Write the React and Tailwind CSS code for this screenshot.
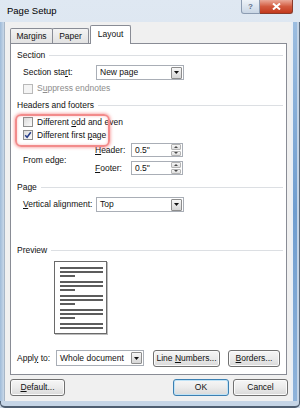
import React from "react";

function U({ children }) {
  return <span className="underline underline-offset-[1px] decoration-[0.5px]">{children}</span>;
}

function Check({ checked, disabled }) {
  return (
    <span
      className={`w-[10px] h-[10px] border flex items-center justify-center shrink-0 ${
        disabled
          ? "border-[#b9b9b9] bg-[#f4f4f4]"
          : "border-[#8e8f8f] bg-linear-to-br from-[#dadada] to-[#fcfcfc]"
      }`}
    >
      {checked && (
        <svg width="8" height="8" viewBox="0 0 8 8">
          <path d="M1.2 4.2 L3.1 6.3 L6.8 1.2" stroke="#263d8a" strokeWidth="1.5" fill="none" />
        </svg>
      )}
    </span>
  );
}

function Arrow() {
  return (
    <span className="w-[11px] h-[12px] border border-[#8d8d8d] rounded-[1px] bg-linear-to-b from-[#f7f7f7] to-[#d6d6d6] flex items-center justify-center shrink-0">
      <svg width="5" height="3" viewBox="0 0 5 3">
        <path d="M0 0H5L2.5 3Z" fill="#111" />
      </svg>
    </span>
  );
}

function Select({ w, h, value }) {
  return (
    <div className={`${w} ${h} border border-[#a9aeb6] bg-white flex items-center justify-between pl-[3px] pr-[1px]`}>
      <span>{value}</span>
      <Arrow />
    </div>
  );
}

function Spin({ value }) {
  return (
    <div className="w-[52px] h-[14px] border border-[#a9aeb6] bg-white flex items-center justify-between pl-[3px] pr-[1px]">
      <span>{value}</span>
      <span className="w-[10px] h-[12px] flex flex-col gap-[1px]">
        <span className="flex-1 border border-[#b4b4b4] rounded-[1px] bg-linear-to-b from-[#f5f5f5] to-[#dedede] flex items-center justify-center">
          <svg width="4" height="2" viewBox="0 0 4 2"><path d="M0 2H4L2 0Z" fill="#4a4a4a" /></svg>
        </span>
        <span className="flex-1 border border-[#b4b4b4] rounded-[1px] bg-linear-to-b from-[#f5f5f5] to-[#dedede] flex items-center justify-center">
          <svg width="4" height="2" viewBox="0 0 4 2"><path d="M0 0H4L2 2Z" fill="#4a4a4a" /></svg>
        </span>
      </span>
    </div>
  );
}

function Btn({ w, children, def }) {
  return (
    <div
      className={`${w} h-full rounded-[3px] border flex items-center justify-center bg-linear-to-b from-[#f6f6f6] via-[#ebebeb] to-[#d9d9d9] ${
        def ? "border-[#3c7fb1] shadow-[inset_0_0_0_1px_#bfe3f7]" : "border-[#707070] shadow-[inset_0_0_0_1px_#fbfbfb]"
      }`}
    >
      <span>{children}</span>
    </div>
  );
}

function Group({ label, mt }) {
  return (
    <div className={`${mt} h-[10px] flex items-center gap-[4px] pr-[3px]`}>
      <span>{label}</span>
      <span className="flex-1 h-px bg-[#dcdfe3]" />
    </div>
  );
}

function PreviewGroup({ last }) {
  return (
    <div className="flex flex-col gap-[2px] mb-[4px]">
      <span className="w-[43px] h-[2px] bg-[#5c5c5c]" />
      <span className="w-[43px] h-[2px] bg-[#5c5c5c]" />
      {!last && <span className="w-[15px] h-[2px] bg-[#5c5c5c]" />}
    </div>
  );
}

export default function App() {
  return (
    <div className="w-[300px] h-[408px] overflow-hidden bg-linear-to-b from-[#dfe8f2] to-[#cdd9e7] text-[8.5px] leading-none text-[#111] font-[family-name:'Liberation_Sans',Arial,sans-serif]">
      {/* Title bar */}
      <div className="h-[22px] flex items-start">
        <div className="pl-[7px] pt-[6px] text-[9.5px] text-black">Page Setup</div>
        <div className="ml-auto mr-[7px] flex">
          <div className="w-[19px] h-[14px] border border-[#8c9cb2] border-t-0 rounded-bl-[3px] bg-linear-to-b from-[#eef3f8] to-[#c9d6e5] flex items-center justify-center text-[8px] font-bold text-[#5b6f88]">
            ?
          </div>
          <div className="w-[33px] h-[14px] border border-[#8a3a2a] border-t-0 border-l-0 rounded-br-[3px] bg-linear-to-b from-[#e9a898] via-[#d25a3f] to-[#c2381c] flex items-center justify-center">
            <svg width="9" height="7" viewBox="0 0 9 7">
              <path d="M1 0.5 L8 6.5 M8 0.5 L1 6.5" stroke="#fff" strokeWidth="2" />
            </svg>
          </div>
        </div>
      </div>

      {/* Body with side frames */}
      <div className="flex h-[379px]">
        <div className="w-[4px] bg-linear-to-r from-[#9fbbd9] to-[#c9d8e8]" />
        <div className="w-[287px] bg-[#f0f0f0] border-l border-[#a7b6c7] flex flex-col pt-[3px]">
          {/* Tabs */}
          <div className="h-[18px] flex items-end pl-[5px]">
            <div className="w-[43px] h-[15px] border border-b-0 border-[#898c95] rounded-t-[2px] bg-linear-to-b from-[#f3f3f3] to-[#e2e2e2] flex items-center justify-center">
              Margins
            </div>
            <div className="w-[37px] h-[15px] -ml-px border border-b-0 border-[#898c95] rounded-t-[2px] bg-linear-to-b from-[#f3f3f3] to-[#e2e2e2] flex items-center justify-center">
              Paper
            </div>
            <div className="w-[41px] h-[19px] ml-px -mb-px relative z-10 border border-b-0 border-[#898c95] rounded-t-[2px] bg-white flex items-center justify-center pb-[2px]">
              Layout
            </div>
          </div>

          {/* Panel */}
          <div className="ml-[5px] mr-[4px] h-[332px] border border-[#898c95] bg-white flex flex-col pl-[6px]">
            <Group label="Section" mt="mt-[6px]" />
            <div className="mt-[5px] h-[15px] flex items-center pl-[6px]">
              <span className="w-[73px]">
                Section sta<U>r</U>t:
              </span>
              <Select w="w-[88px]" h="h-[15px]" value="New page" />
            </div>
            <div className="mt-[3px] h-[11px] flex items-center pl-[6px] gap-[4px] text-[#8d8d8d]">
              <Check disabled />
              <span>
                S<U>u</U>ppress endnotes
              </span>
            </div>

            <Group label="Headers and footers" mt="mt-[6px]" />
            <div className="relative mt-[7px]">
              <div className="absolute left-[-2px] top-[-3px] w-[95px] h-[33px] rounded-[6px] border-2 border-[#f28b8b] shadow-[0_0_3px_1px_rgba(240,80,80,0.45),inset_0_0_3px_rgba(240,80,80,0.35)]" />
              <div className="h-[10px] flex items-center pl-[6px] gap-[4px]">
                <Check />
                <span>
                  Different <U>o</U>dd and even
                </span>
              </div>
              <div className="mt-[3px] h-[10px] flex items-center pl-[6px] gap-[4px]">
                <Check checked />
                <span>
                  Different first <U>p</U>age
                </span>
              </div>
            </div>
            <div className="mt-[3px] flex items-center pl-[6px]">
              <span className="w-[72px] pt-[2px]">From edge:</span>
              <div className="flex flex-col gap-[4px]">
                <div className="flex items-center">
                  <span className="w-[36px]">
                    <U>H</U>eader:
                  </span>
                  <Spin value='0.5"' />
                </div>
                <div className="flex items-center">
                  <span className="w-[36px]">
                    <U>F</U>ooter:
                  </span>
                  <Spin value='0.5"' />
                </div>
              </div>
            </div>

            <Group label="Page" mt="mt-[7px]" />
            <div className="mt-[5px] h-[15px] flex items-center pl-[6px]">
              <span className="w-[73px]">
                <U>V</U>ertical alignment:
              </span>
              <Select w="w-[88px]" h="h-[15px]" value="Top" />
            </div>

            <Group label="Preview" mt="mt-[33px]" />
            <div className="mt-[6px] ml-[37px] w-[53px] h-[73px] border border-[#6a6a6a] bg-white shadow-[1px_1px_0_#bdbdbd] overflow-hidden pt-[5px] pl-[5px]">
              <PreviewGroup />
              <PreviewGroup />
              <PreviewGroup />
              <PreviewGroup />
              <PreviewGroup last />
            </div>

            <div className="mt-[16px] h-[16px] flex items-center">
              <span className="w-[39px]">
                Appl<U>y</U> to:
              </span>
              <Select w="w-[88px]" h="h-[16px]" value="Whole document" />
              <div className="ml-[9px] h-[17px]">
                <Btn w="w-[67px]">
                  Line <U>N</U>umbers...
                </Btn>
              </div>
              <div className="ml-[8px] h-[17px]">
                <Btn w="w-[52px]">
                  <U>B</U>orders...
                </Btn>
              </div>
            </div>
          </div>

          {/* Bottom buttons */}
          <div className="mt-[4px] h-[17px] flex pl-[5px] pr-[3px]">
            <Btn w="w-[55px]">
              <U>D</U>efault...
            </Btn>
            <div className="ml-auto flex gap-[4px] h-full">
              <Btn w="w-[56px]" def>
                OK
              </Btn>
              <Btn w="w-[55px]">Cancel</Btn>
            </div>
          </div>
        </div>
        <div className="flex-1 flex">
          <div className="w-[2px] bg-[#e9eff6]" />
          <div className="w-[4px] bg-linear-to-b from-[#9cbde0] via-[#6f9dcf] to-[#8fb3da]" />
          <div className="flex-1 bg-[#c3d3e5] border-r border-[#5b6b7e]" />
        </div>
      </div>
      <div className="h-[7px] bg-[#c6d5e6] border-b-2 border-x border-[#4f5e70] rounded-b-[5px]" />
    </div>
  );
}
